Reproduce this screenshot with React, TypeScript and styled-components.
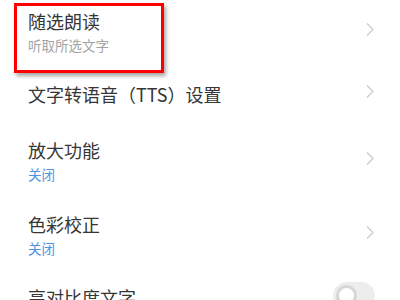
import React from 'react'
import styled, { createGlobalStyle } from 'styled-components'

const GlobalStyle = createGlobalStyle`
  html, body {
    margin: 0;
    padding: 0;
    background: #ffffff;
    overflow: hidden;
  }
  body {
    font-family: "Noto Sans CJK SC", "Noto Sans", sans-serif;
  }
`

const PageStyled = styled.div`
  width: 400px;
  height: 300px;
  overflow: hidden;
  background: #ffffff;
`

const ListStyled = styled.div`
  display: flex;
  flex-direction: column;
  margin-top: -6px;
`

const RowStyled = styled.div<{ $sub?: boolean }>`
  position: relative;
  display: flex;
  flex-direction: row;
  align-items: center;
  padding: ${props => (props.$sub ? '15px 25px 14px 28px' : '14px 25px 17px 28px')};
`

const TextStyled = styled.div`
  display: flex;
  flex-direction: column;
  flex: 1;
`

const TitleStyled = styled.div`
  font-size: 18px;
  line-height: 24px;
  color: #363636;
`

const SubtitleStyled = styled.div<{ $accent?: boolean }>`
  margin-top: 3px;
  font-size: 13.5px;
  line-height: 18px;
  color: ${props => (props.$accent ? '#4b93e3' : '#a3a3a3')};
`

const ChevronStyled = styled.svg`
  width: 10px;
  height: 15px;
  margin-top: -5px;
  flex-shrink: 0;
`

const ToggleStyled = styled.div`
  position: relative;
  width: 42px;
  height: 27px;
  border-radius: 14px;
  background: #ededed;
  align-self: flex-start;
  margin-top: -3px;
  margin-bottom: -3px;
  flex-shrink: 0;
`

const KnobStyled = styled.div`
  position: absolute;
  left: 3px;
  top: 3px;
  width: 15px;
  height: 15px;
  border-radius: 50%;
  background: #ffffff;
  border: 3px solid #d6d6d6;
`

const HighlightStyled = styled.div`
  position: absolute;
  left: 14px;
  top: 9px;
  width: 144px;
  height: 64px;
  border: 3px solid #ff0000;
  box-shadow: 2px 3px 4px rgba(0, 0, 0, 0.35);
  pointer-events: none;
`

function Chevron() {
  return (
    <ChevronStyled viewBox="0 0 10 15">
      <path d="M2 1.5 L8 7.5 L2 13.5" fill="none" stroke="#cccccc" strokeWidth="1.3" />
    </ChevronStyled>
  )
}

function App() {
  return (
    <PageStyled>
      <GlobalStyle />
      <ListStyled>
        <RowStyled $sub>
          <TextStyled>
            <TitleStyled>随选朗读</TitleStyled>
            <SubtitleStyled>听取所选文字</SubtitleStyled>
          </TextStyled>
          <Chevron />
          <HighlightStyled />
        </RowStyled>
        <RowStyled>
          <TextStyled>
            <TitleStyled>文字转语音（TTS）设置</TitleStyled>
          </TextStyled>
          <Chevron />
        </RowStyled>
        <RowStyled $sub>
          <TextStyled>
            <TitleStyled>放大功能</TitleStyled>
            <SubtitleStyled $accent>关闭</SubtitleStyled>
          </TextStyled>
          <Chevron />
        </RowStyled>
        <RowStyled $sub>
          <TextStyled>
            <TitleStyled>色彩校正</TitleStyled>
            <SubtitleStyled $accent>关闭</SubtitleStyled>
          </TextStyled>
          <Chevron />
        </RowStyled>
        <RowStyled>
          <TextStyled>
            <TitleStyled>高对比度文字</TitleStyled>
          </TextStyled>
          <ToggleStyled>
            <KnobStyled />
          </ToggleStyled>
        </RowStyled>
      </ListStyled>
    </PageStyled>
  )
}

export default App
